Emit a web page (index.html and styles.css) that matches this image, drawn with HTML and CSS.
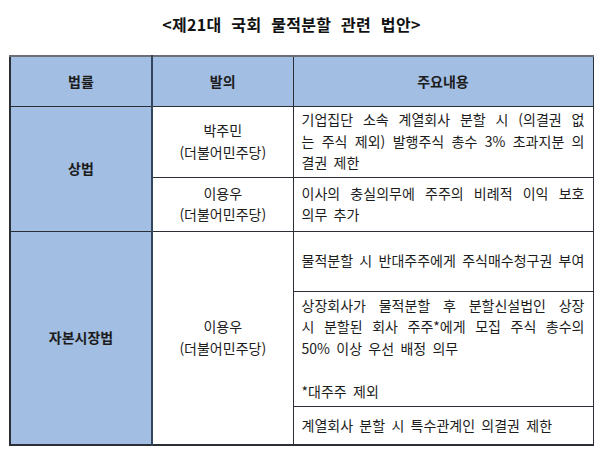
FILE: index.html
```html
<!DOCTYPE html>
<html lang="ko">
<head>
<meta charset="utf-8">
<link rel="stylesheet" href="styles.css">
</head>
<body>
<div class="page">
  <h1 class="title">&lt;제21대 국회 물적분할 관련 법안&gt;</h1>
  <table class="bills">
    <colgroup>
      <col class="c-law">
      <col class="c-sponsor">
      <col class="c-desc">
    </colgroup>
    <thead>
      <tr class="r-head">
        <th class="h-law">법률</th>
        <th class="h-sponsor">발의</th>
        <th class="h-desc">주요내용</th>
      </tr>
    </thead>
    <tbody>
      <tr class="r1">
        <td class="law" rowspan="2">상법</td>
        <td class="sponsor">박주민<br>(더불어민주당)</td>
        <td class="desc">
          <span class="jl">기업집단 소속 계열회사 분할 시 (의결권 없</span>
          <span class="jl">는 주식 제외) 발행주식 총수 3% 초과지분 의</span>
          <span class="ll">결권 제한</span>
        </td>
      </tr>
      <tr class="r2">
        <td class="sponsor">이용우<br>(더불어민주당)</td>
        <td class="desc">
          <span class="jl">이사의 충실의무에 주주의 비례적 이익 보호</span>
          <span class="ll">의무 추가</span>
        </td>
      </tr>
      <tr class="r3">
        <td class="law" rowspan="3">자본시장법</td>
        <td class="sponsor" rowspan="3">이용우<br>(더불어민주당)</td>
        <td class="desc sub">물적분할 시 반대주주에게 주식매수청구권 부여</td>
      </tr>
      <tr class="r4">
        <td class="desc sub">
          <span class="jl">상장회사가 물적분할 후 분할신설법인 상장</span>
          <span class="jl">시 분할된 회사 주주*에게 모집 주식 총수의</span>
          <span class="ll">50% 이상 우선 배정 의무</span>
          <span class="ll">&nbsp;</span>
          <span class="ll">*대주주 제외</span>
        </td>
      </tr>
      <tr class="r5">
        <td class="desc sub">계열회사 분할 시 특수관계인 의결권 제한</td>
      </tr>
    </tbody>
  </table>
</div>
</body>
</html>
```

FILE: styles.css
```css
html, body {
  margin: 0;
  padding: 0;
  background: #ffffff;
}

.page {
  width: 600px;
  height: 451px;
  padding: 0 0 0 9px;
  box-sizing: border-box;
  font-family: "Noto Sans CJK KR", "Noto Sans", sans-serif;
  color: #1c1c1c;
  overflow: hidden;
}

.title {
  margin: 0;
  height: 55px;
  padding: 13px 18px 0 0;
  box-sizing: border-box;
  width: 583px;
  text-align: center;
  font-size: 16px;
  line-height: 22px;
  font-weight: bold;
  color: #111;
  word-spacing: 5px;
  letter-spacing: 0.3px;
}

.bills {
  width: 583px;
  border-collapse: collapse;
  table-layout: fixed;
  font-size: 14px;
  line-height: 21.5px;
  border-top: 2px solid #6b6f75;
  border-left: 2px solid #2a2f36;
  border-bottom: 2px solid #2a2f36;
  border-right: 1px solid #2a2f36;
}

.c-law { width: 142px; }
.c-sponsor { width: 141px; }
.c-desc { width: 300px; }

.bills th,
.bills td {
  border: 1px solid #2a2f36;
  padding: 0;
  vertical-align: middle;
}

.bills th {
  background: #a2bee2;
  font-weight: bold;
  text-align: center;
  color: #1c1c1c;
}

.r-head { height: 50px; }
.r1 { height: 71px; }
.r2 { height: 54px; }
.r3 { height: 60px; }
.r4 { height: 115px; }
.r5 { height: 39px; }

.law {
  background: #a2bee2;
  text-align: center;
  font-weight: bold;
  border-right: 2px solid #34465e !important;
}

.h-law {
  border-right: 2px solid #34465e !important;
}

.sponsor {
  text-align: center;
}

.desc {
  padding: 0 8px 0 8px !important;
  word-spacing: 2.4px;
}

.desc.sub {
  border-top-color: #55595f;
}

.jl {
  display: block;
  text-align: justify;
  text-align-last: justify;
}

.ll {
  display: block;
  text-align: left;
}
```
